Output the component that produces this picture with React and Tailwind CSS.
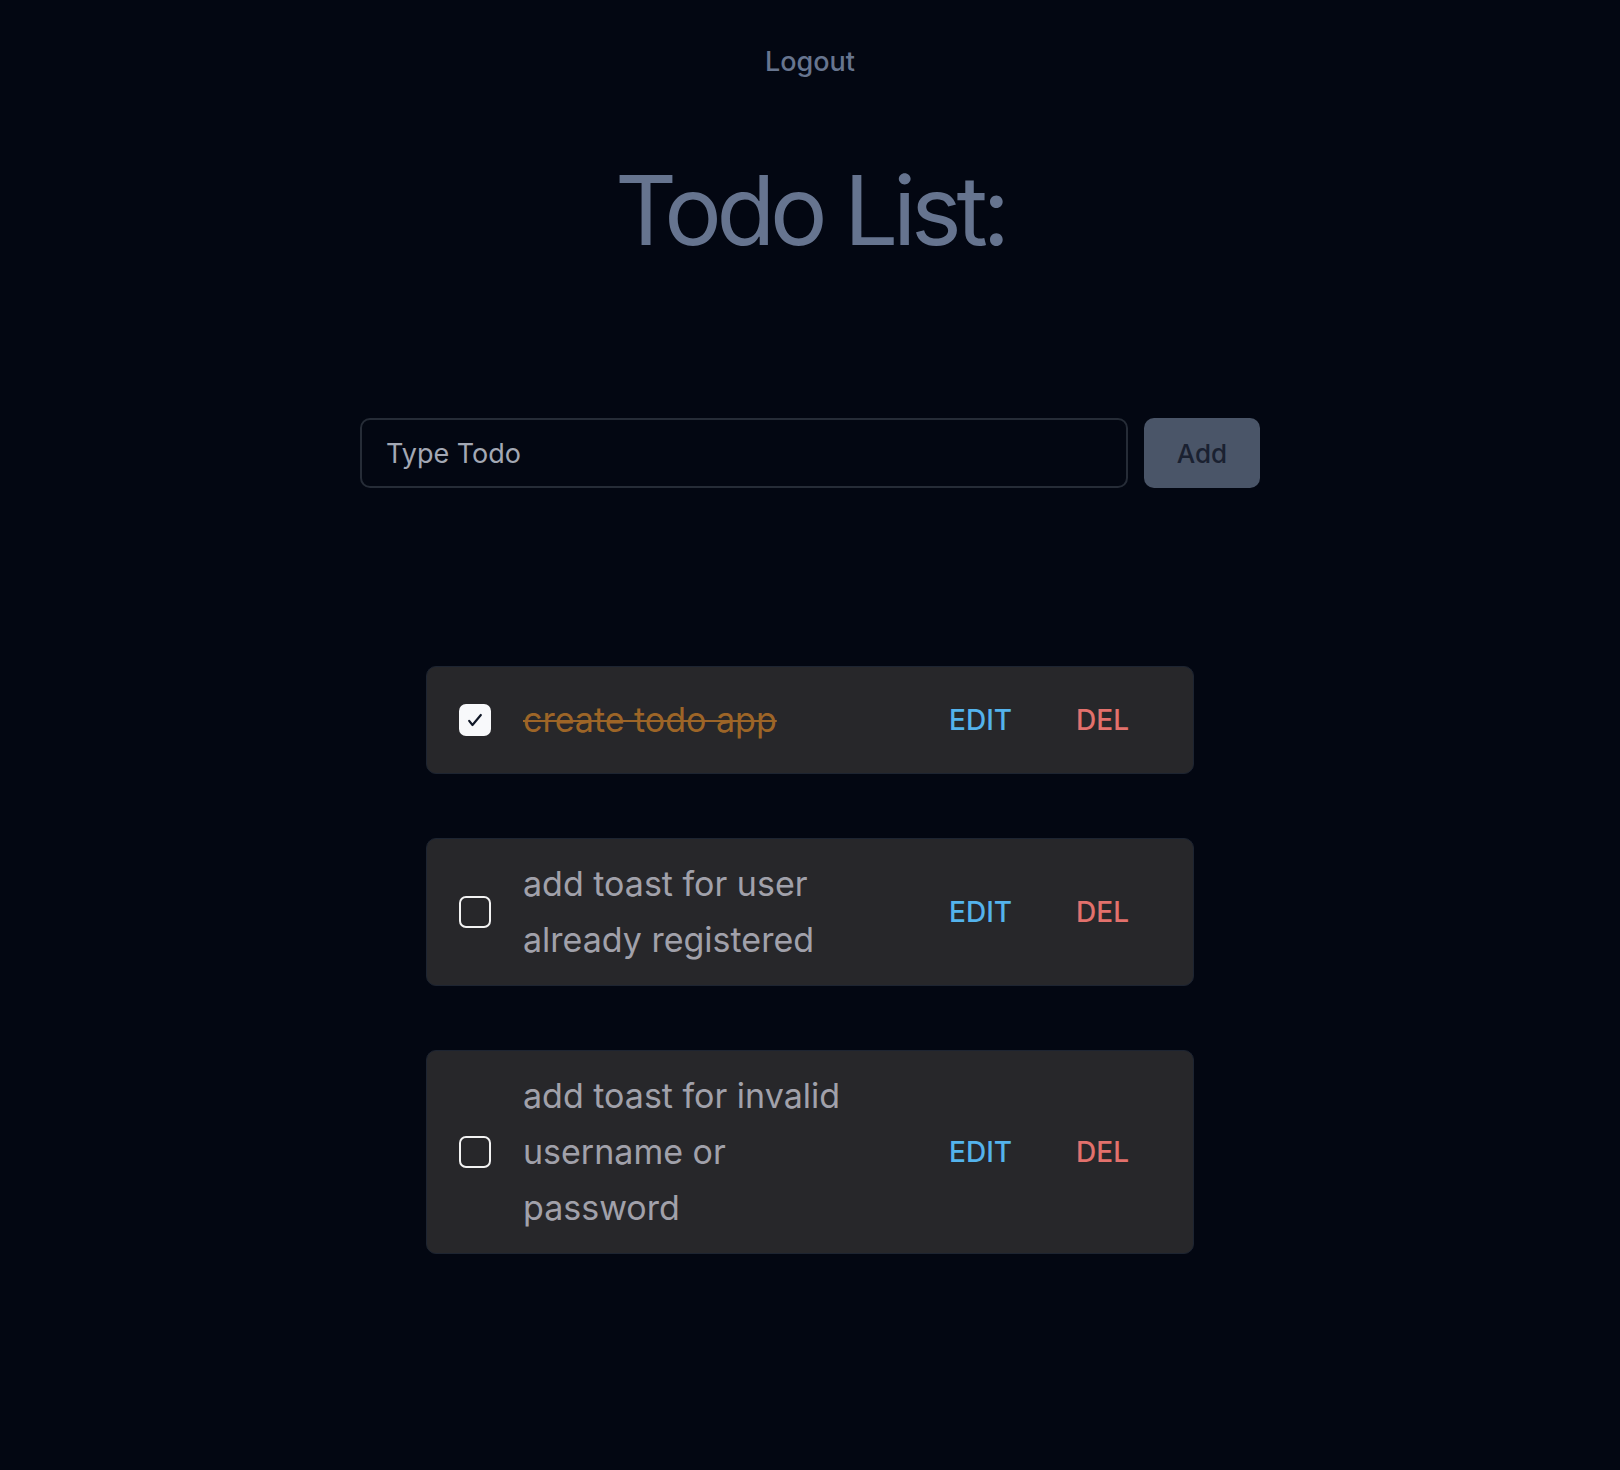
import { useState } from "react"

const initialTodos = [
  { id: 1, text: "create todo app", done: true },
  { id: 2, text: "add toast for user already registered", done: false },
  { id: 3, text: "add toast for invalid username or password", done: false },
]

const CheckBox = ({ checked, onChange }) => (
  <button
    onClick={onChange}
    className={`flex h-8 w-8 shrink-0 items-center justify-center rounded-[7px] ${
      checked ? "bg-[#f8f9fb]" : "border-2 border-[#f2f2f2]"
    }`}
  >
    {checked && (
      <svg viewBox="0 0 24 24" className="h-5 w-5" fill="none" stroke="#111827" strokeWidth="2.6" strokeLinecap="round" strokeLinejoin="round">
        <path d="M5 13l4 5L19 6" />
      </svg>
    )}
  </button>
)

const TodoItem = ({ todo, onToggle, onDelete }) => (
  <div className="flex items-center rounded-[10px] border border-[#1d2431] bg-[#27272a] px-8 py-[17px]">
    <CheckBox checked={todo.done} onChange={onToggle} />
    <p
      className={`ml-8 w-[330px] text-[34px] leading-[56px] ${
        todo.done ? "text-[#9d6527] line-through decoration-2" : "text-[#a1a1aa]"
      }`}
    >
      {todo.text}
    </p>
    <div className="ml-auto flex items-center">
      <button className="px-8 py-4 text-[28px] font-medium leading-10 text-[#54b3ec]">EDIT</button>
      <button onClick={onDelete} className="px-8 py-4 text-[28px] font-medium leading-10 text-[#e2716c]">
        DEL
      </button>
    </div>
  </div>
)

export default function App() {
  const [todos, setTodos] = useState(initialTodos)
  const [input, setInput] = useState("")

  const addTodo = () => {
    if (!input.trim()) return
    setTodos([...todos, { id: Date.now(), text: input, done: false }])
    setInput("")
  }

  return (
    <div className="min-h-[1470px] bg-[#030712] font-['Inter','Liberation_Sans',sans-serif] antialiased">
      <div className="flex flex-col items-center pt-[44px]">
        <button className="text-[27px] font-medium leading-9 text-[#67758f]">Logout</button>

        <h1 className="mt-[82px] text-[96px] leading-none tracking-[-0.055em] text-[#66748f]">Todo List:</h1>

        {/* Input row */}
        <div className="mt-[160px] flex w-full max-w-[900px] gap-4">
          <input
            value={input}
            onChange={(e) => setInput(e.target.value)}
            placeholder="Type Todo"
            className="h-[70px] flex-1 rounded-[10px] border-2 border-[#262c37] bg-transparent px-6 text-[27px] text-[#d1d5db] outline-none placeholder:text-[#a3a8b4]"
          />
          <button
            onClick={addTodo}
            className="h-[70px] w-[116px] rounded-[10px] bg-[#4a5568] text-[26px] font-medium text-[#1a2131]"
          >
            Add
          </button>
        </div>

        {/* Todo list */}
        <div className="mt-[178px] flex w-full max-w-[768px] flex-col gap-16">
          {todos.map((todo) => (
            <TodoItem
              key={todo.id}
              todo={todo}
              onToggle={() => setTodos(todos.map((t) => (t.id === todo.id ? { ...t, done: !t.done } : t)))}
              onDelete={() => setTodos(todos.filter((t) => t.id !== todo.id))}
            />
          ))}
        </div>
      </div>
    </div>
  )
}
